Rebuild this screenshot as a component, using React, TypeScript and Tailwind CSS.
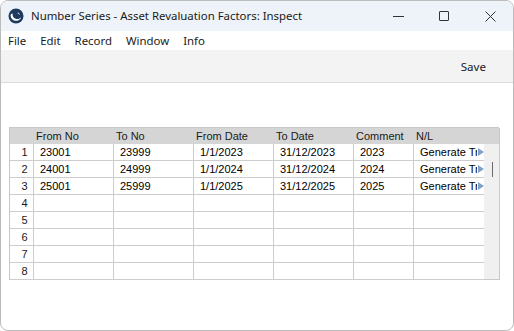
import { Fragment } from "react";

const rows = [
  { n: 1, from: "23001", to: "23999", fd: "1/1/2023", td: "31/12/2023", c: "2023", nl: "Generate Tr" },
  { n: 2, from: "24001", to: "24999", fd: "1/1/2024", td: "31/12/2024", c: "2024", nl: "Generate Tr" },
  { n: 3, from: "25001", to: "25999", fd: "1/1/2025", td: "31/12/2025", c: "2025", nl: "Generate Tr" },
  { n: 4 },
  { n: 5 },
  { n: 6 },
  { n: 7 },
  { n: 8 },
] as { n: number; from?: string; to?: string; fd?: string; td?: string; c?: string; nl?: string }[];

const headers = ["", "From No", "To No", "From Date", "To Date", "Comment", "N/L", ""];

function Logo() {
  return (
    <svg width="16" height="16" viewBox="0 0 16 16">
      <circle cx="8" cy="8" r="7.5" fill="#1f3a5f" />
      <path d="M2.6 7.2 C2.6 10.6 5.4 13 8.6 12.8 C11 12.6 12.8 11 13.2 9 C12 10.6 10.2 11.4 8.4 11 C6 10.5 4.2 8.6 4.6 5.6 C3.4 5.8 2.6 6.4 2.6 7.2 Z" fill="#ffffff" />
      <path d="M9.6 4.4 C11 4.6 12 5.8 11.8 7.2 C11.2 6.2 10.4 5.6 9.6 5.4 Z" fill="#cfd8e3" />
    </svg>
  );
}

export default function App() {
  const cell = "h-[17px] border-r border-b border-[#cdcdcd] text-[11px] leading-[17px] pl-[6px] whitespace-nowrap overflow-hidden";

  return (
    <div className="w-[514px] h-[331px] bg-white" style={{ fontFamily: "'Noto Sans', sans-serif" }}>
      <div className="w-full h-full rounded-[8px] border border-[#bcbcbc] overflow-hidden flex flex-col bg-white">
        {/* Title bar */}
        <div className="h-[30px] bg-[#eef3f9] flex items-center shrink-0">
          <div className="pl-[7px] pr-[7px] flex items-center"><Logo /></div>
          <div className="text-[11.4px] text-[#1a1a1a] flex-1">Number Series - Asset Revaluation Factors: Inspect</div>
          <div className="flex items-center h-full">
            <div className="w-[46px] h-full flex items-center justify-center">
              <div className="w-[11px] h-px bg-[#333]" />
            </div>
            <div className="w-[46px] h-full flex items-center justify-center">
              <div className="w-[10px] h-[10px] border border-[#333] rounded-[1px]" />
            </div>
            <div className="w-[46px] h-full flex items-center justify-center">
              <svg width="11" height="11" viewBox="0 0 11 11">
                <path d="M0.5 0.5 L10.5 10.5 M10.5 0.5 L0.5 10.5" stroke="#333" strokeWidth="1" />
              </svg>
            </div>
          </div>
        </div>

        {/* Menu */}
        <div className="h-[19px] flex items-center gap-[14px] px-[7px] text-[11.4px] text-[#1a1a1a] shrink-0">
          <span>File</span>
          <span>Edit</span>
          <span>Record</span>
          <span>Window</span>
          <span>Info</span>
        </div>

        {/* Toolbar */}
        <div className="h-[33px] bg-[#f3f3f3] border-b border-[#dcdcdc] flex items-center justify-end pr-[27px] text-[11.6px] text-[#1a1a1a] shrink-0">
          <span className="mt-[2px]">Save</span>
        </div>

        {/* Content */}
        <div className="flex-1 pt-[44px] pl-[8px]" style={{ fontFamily: "'Liberation Sans', sans-serif" }}>
          <div className="w-[490px] border-l border-t border-[#c8c8c8] grid grid-cols-[24px_80px_80px_80px_80px_60px_70px_16px]">
            {headers.map((h, i) => (
              <div
                key={i}
                className={`h-[16px] bg-[#d5d5d5] text-[11px] leading-[16px] pl-[2px] text-[#1a1a1a] ${i === 7 ? "border-r border-[#c8c8c8]" : ""}`}
              >
                {h}
              </div>
            ))}
            {rows.map((r, idx) => (
              <Fragment key={r.n}>
                <div className={`${cell} pl-0 text-center text-[#1a1a1a]`}>{r.n}</div>
                <div className={cell}>{r.from}</div>
                <div className={cell}>{r.to}</div>
                <div className={cell}>{r.fd}</div>
                <div className={cell}>{r.td}</div>
                <div className={cell}>{r.c}</div>
                <div className={`${cell} relative border-r-0`}>
                  {r.nl}
                  {r.nl && (
                    <span className="absolute right-0 top-0 h-full w-[7px] bg-white flex items-center justify-center">
                      <svg width="6" height="8" viewBox="0 0 6 8">
                        <path d="M0 0 L6 4 L0 8 Z" fill="#7fa2c9" />
                      </svg>
                    </span>
                  )}
                </div>
                <div
                  className={`h-[17px] bg-[#f0f0f0] border-r border-[#c8c8c8] relative ${idx === 7 ? "border-b" : ""}`}
                >
                  {idx === 1 && <div className="absolute left-[8px] top-[1px] w-px h-[15px] bg-[#6a6a6a]" />}
                </div>
              </Fragment>
            ))}
          </div>
        </div>
      </div>
    </div>
  );
}
